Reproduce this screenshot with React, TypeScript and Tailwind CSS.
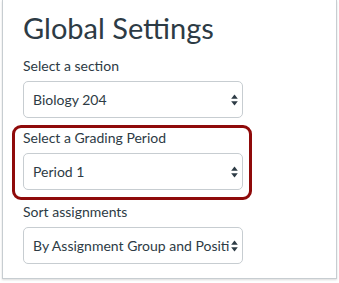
import React from 'react';

function Arrows() {
  return (
    <svg width="7" height="12" viewBox="0 0 7 12" className="shrink-0">
      <path d="M3.5 0.5 L6.8 4.7 L0.2 4.7 Z" fill="#2d3b45" />
      <path d="M3.5 11.5 L6.8 7.3 L0.2 7.3 Z" fill="#2d3b45" />
    </svg>
  );
}

function FakeSelect({ value }: { value: string }) {
  return (
    <div className="flex h-[37px] w-[220px] items-center rounded-[5px] border border-[#c7cdd1] bg-white pl-[9px] pr-[4px]">
      <span className="min-w-0 flex-1 overflow-hidden whitespace-nowrap text-[14px] leading-[20px] text-[#2d3b45]">{value}</span>
      <Arrows />
    </div>
  );
}

export default function App() {
  return (
    <div className="h-[283px] w-[339px] overflow-hidden bg-white px-[2px] font-['Lato',sans-serif] text-[#2d3b45]">
      <div className="h-[279px] border-x border-b border-[#c7cdd1] pl-[20px] pt-[10px] shadow-[0_1px_2px_rgba(0,0,0,0.15)]">
        <h1 className="text-[29px] font-normal leading-[35px]">Global Settings</h1>

        <div className="mt-[11px] text-[14px] leading-[20px]">Select a section</div>
        <div className="mt-[5px]">
          <FakeSelect value="Biology 204" />
        </div>

        {/* highlighted grading period */}
        <div className="-ml-[11px] mt-[7px] w-fit rounded-[9px] border-[3px] border-[#8f0a0a] pb-[7px] pl-[8px] pr-[6px]">
          <div className="text-[14px] leading-[20px]">Select a Grading Period</div>
          <div className="mt-[5px]">
            <FakeSelect value="Period 1" />
          </div>
        </div>

        <div className="mt-[2px] text-[14px] leading-[20px]">Sort assignments</div>
        <div className="mt-[5px]">
          <FakeSelect value="By Assignment Group and Positi" />
        </div>
      </div>
    </div>
  );
}
